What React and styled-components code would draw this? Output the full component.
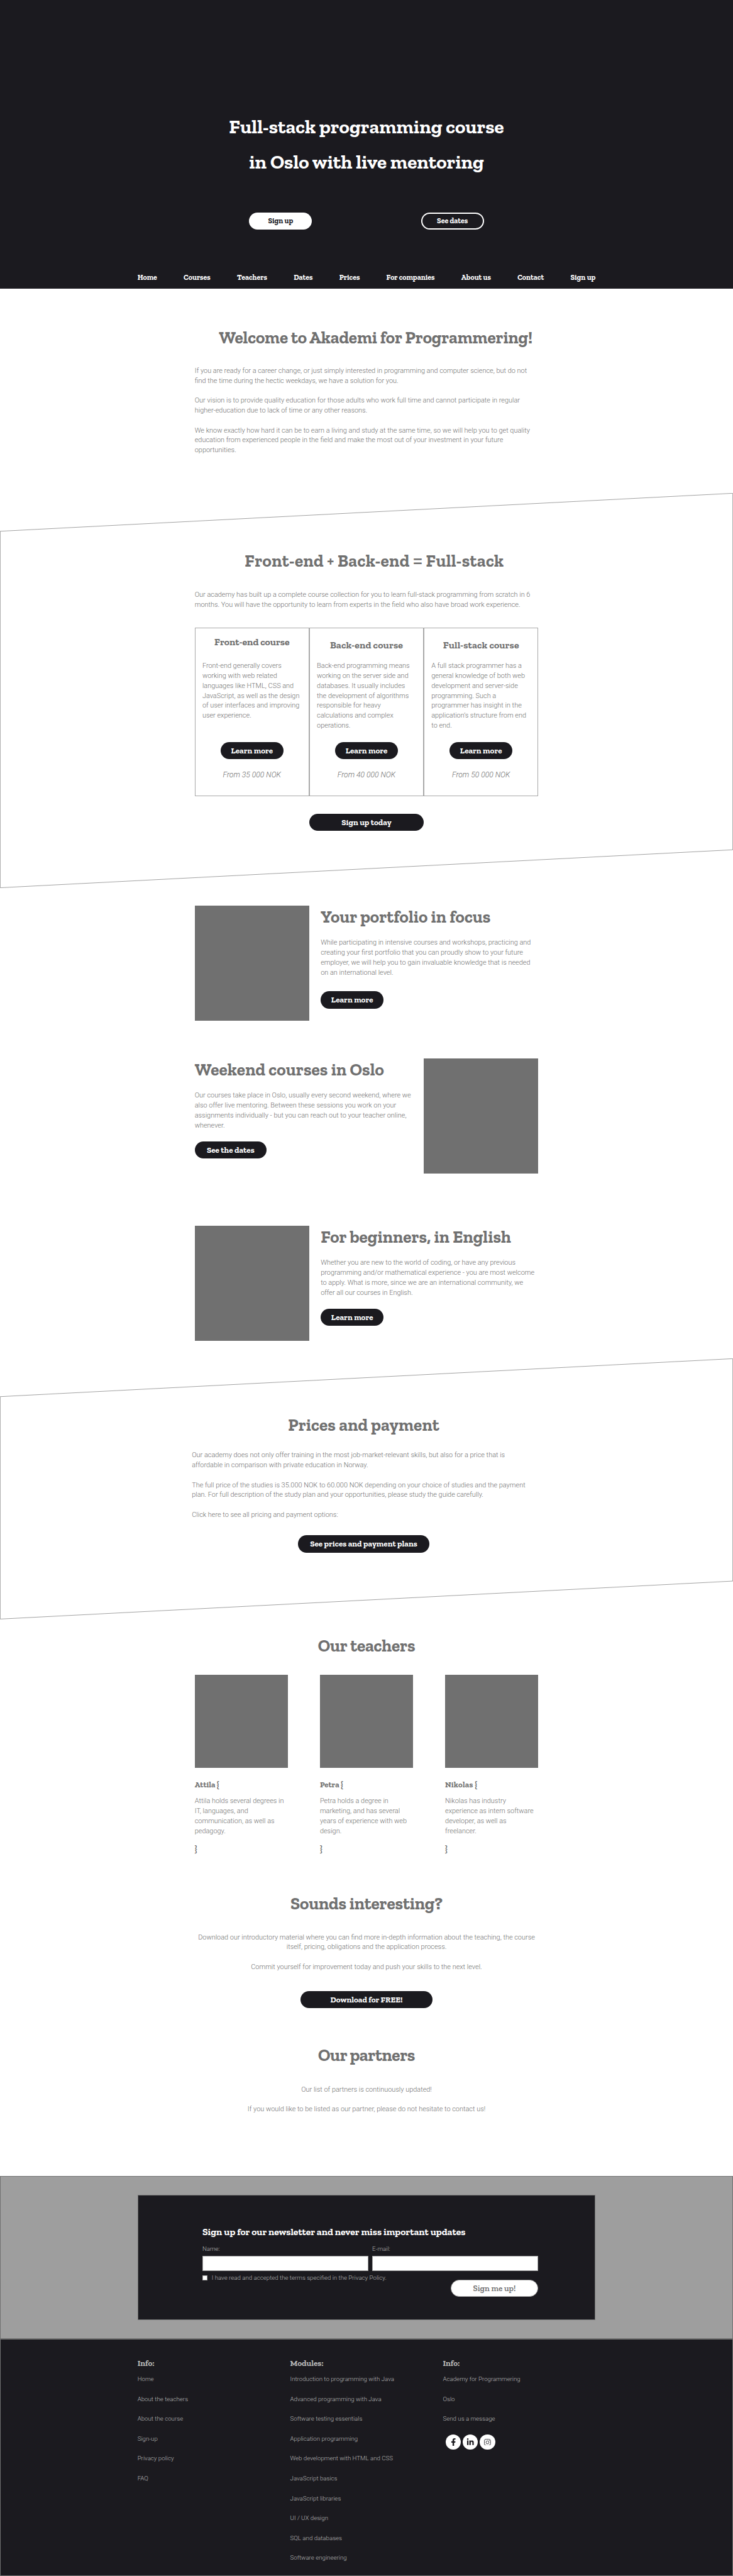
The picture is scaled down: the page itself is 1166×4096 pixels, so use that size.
import React from "react";
import styled, { createGlobalStyle, css } from "styled-components";
import { FaFacebookF, FaLinkedinIn } from "react-icons/fa";

/* The design grid is 1920 units wide; u() turns design units into pixels. */
const u = (n) => `${((n * 1166) / 1920).toFixed(3)}px`;

const color = {
  ink: "#1b1a1f",
  grey: "#707070",
  hairline: "#a8a8a8",
  band: "#9e9e9e",
  pale: "#b7b7b7",
  white: "#ffffff",
};
const slab = `"Zilla Slab", "Roboto Serif", "Noto Serif", serif`;
const sans = `Roboto, "Noto Sans", sans-serif`;

const GlobalStyle = createGlobalStyle`
  *, *::before, *::after { box-sizing: border-box; }
  body {
    margin: 0;
    background: ${color.white};
    color: ${color.grey};
    font-family: ${sans};
    font-weight: 300;
  }
  h1, h2, h3, p, ul { margin: 0; padding: 0; }
  ul { list-style: none; }
`;

const Page = styled.div`
  width: ${u(1920)};
  overflow: hidden;
`;

const Container = styled.div`
  position: relative;
  width: ${u(900)};
  margin: 0 auto;
  display: flex;
  flex-direction: column;
  align-items: center;
  left: ${({ $shift = 0 }) => u($shift)};
`;

/* ---------- shared text and buttons ---------- */

const Heading = styled.h2`
  font: 700 ${u(45)} / ${u(60)} ${slab};
  letter-spacing: ${({ $track = 0 }) => u($track)};
  padding-left: ${({ $indent = 0 }) => u($indent)};
  white-space: nowrap;
`;

const Copy = styled.p`
  align-self: ${({ $center }) => ($center ? "center" : "flex-start")};
  text-align: ${({ $center }) => ($center ? "center" : "left")};
  margin-top: ${({ $gap = 0 }) => u($gap)};
  font: 300 ${u(18)} / ${u(26)} ${sans};
  white-space: pre;
`;

const buttonLook = {
  dark: css`
    background: ${color.ink};
    color: ${color.white};
    font-size: ${u(21.6)};
  `,
  light: css`
    background: ${color.white};
    color: ${color.ink};
    font-size: ${u(19.5)};
  `,
  outline: css`
    background: transparent;
    color: ${color.white};
    border: 2px solid ${color.white};
    font-size: ${u(19.6)};
  `,
  submit: css`
    background: ${color.white};
    color: ${color.grey};
    border: 1px solid ${color.hairline};
    font-size: ${u(21.8)};
    font-weight: 600;
  `,
};

const Button = styled.button`
  flex: none;
  display: flex;
  align-items: center;
  justify-content: center;
  width: ${({ $width = 165 }) => u($width)};
  height: ${u(45)};
  margin: ${({ $gap = 0 }) => u($gap)} 0 0;
  padding: 0;
  border: 0;
  border-radius: ${u(22.5)};
  font-family: ${slab};
  font-weight: 700;
  line-height: 1.2;
  white-space: nowrap;
  ${({ $look = "dark" }) => buttonLook[$look]}
`;

/* ---------- hero ---------- */

const Hero = styled.header`
  height: ${u(755)};
  padding-top: ${u(286.4)};
  background: ${color.ink};
  color: ${color.white};
  display: flex;
  flex-direction: column;
  align-items: center;
`;

const HeroTitle = styled.h1`
  font: 700 ${u(51.4)} / ${u(93)} ${slab};
  text-align: center;
`;

const HeroActions = styled.div`
  display: flex;
  gap: ${u(285)};
  margin-top: ${u(84)};
`;

const Nav = styled.nav`
  width: ${u(1200)};
  margin-top: ${u(114)};
  display: flex;
  justify-content: space-between;
  font: 700 ${u(19.6)} / ${u(26)} ${slab};
`;

/* ---------- sections ---------- */

const Welcome = styled.section`
  height: ${u(536.3)};
  padding-top: ${u(99.2)};
`;

const Slanted = styled.section`
  position: relative;
  height: ${({ $height }) => u($height)};
  padding-top: ${({ $top }) => u($top)};
`;

const Outline = styled.svg`
  position: absolute;
  inset: 0;
  width: 100%;
  height: 100%;
  fill: none;
  stroke: ${color.grey};
  stroke-width: 0.65;
`;

const SlantOutline = ({ height }) => (
  <Outline viewBox={`0 0 1920 ${height}`} preserveAspectRatio="none" aria-hidden="true">
    <polygon
      points={`0.6,100 1919.4,0.6 1919.4,${height - 100} 0.6,${height - 0.6}`}
      vectorEffect="non-scaling-stroke"
    />
  </Outline>
);

/* ---------- course cards ---------- */

const Cards = styled.div`
  display: flex;
  width: 100%;
  margin-top: ${u(47.8)};
`;

const Card = styled.article`
  width: ${u(300)};
  height: ${u(440)};
  border: 1px solid ${color.hairline};
  padding: 0 ${u(18.4)};
  display: flex;
  flex-direction: column;
  align-items: center;
`;

const CardHead = styled.div`
  height: ${u(85.4)};
  padding-top: ${({ $drop }) => u($drop)};
`;

const CardTitle = styled.h3`
  font: 700 ${u(26)} / ${u(32)} ${slab};
  letter-spacing: ${({ $track }) => u($track)};
`;

const CardCopy = styled(Copy)`
  height: ${u(212)};
`;

const Price = styled.p`
  margin-top: ${u(29.6)};
  font: italic 300 ${u(20)} / ${u(26)} ${sans};
`;

const courses = [
  {
    title: "Front-end course",
    drop: 19.2,
    track: -0.1,
    price: "From 35 000 NOK",
    text: "Front-end generally covers\nworking with web related\nlanguages like HTML, CSS and\nJavaScript, as well as the design\nof user interfaces and improving\nuser experience.",
  },
  {
    title: "Back-end course",
    drop: 27.2,
    track: 0.2,
    price: "From 40 000 NOK",
    text: "Back-end programming means\nworking on the server side and\ndatabases. It usually includes\nthe development of algorithms\nresponsible for heavy\ncalculations and complex\noperations.",
  },
  {
    title: "Full-stack course",
    drop: 27.2,
    track: 0.15,
    price: "From 50 000 NOK",
    text: "A full stack programmer has a\ngeneral knowledge of both web\ndevelopment and server-side\nprogramming. Such a\nprogrammer has insight in the\napplication’s structure from end\nto end.",
  },
];

/* ---------- features ---------- */

const Features = styled.section`
  height: ${u(1231.7)};
  padding-top: ${u(46.7)};
`;

const Feature = styled.article`
  width: ${u(900)};
  margin: 0 auto ${({ $after }) => u($after)};
  display: flex;
  gap: ${u(30)};
  flex-direction: ${({ $reverse }) => ($reverse ? "row-reverse" : "row")};
`;

const Picture = styled.div`
  flex: none;
  width: ${({ $size }) => u($size)};
  height: ${({ $size }) => u($size)};
  background: ${color.grey};
`;

const FeatureBody = styled.div`
  flex: 1;
  display: flex;
  flex-direction: column;
  align-items: flex-start;
`;

const FeatureTitle = styled(Heading)`
  line-height: ${u(58)};
`;

const features = [
  {
    title: "Your portfolio in focus",
    track: 0.12,
    text: "While participating in intensive courses and workshops, practicing and\ncreating your first portfolio that you can proudly show to your future\nemployer, we will help you to gain invaluable knowledge that is needed\non an international level.",
    action: "Learn more",
    gap: 36,
    after: 100,
  },
  {
    title: "Weekend courses in Oslo",
    track: 0.17,
    text: "Our courses take place in Oslo, usually every second weekend, where we\nalso offer live mentoring. Between these sessions you work on your\nassignments individually - but you can reach out to your teacher online,\nwhenever.",
    action: "See the dates",
    width: 188,
    gap: 29,
    after: 138,
    reverse: true,
  },
  {
    title: "For beginners, in English",
    track: 0.12,
    text: "Whether you are new to the world of coding, or have any previous\nprogramming and/or mathematical experience - you are most welcome\nto apply. What is more, since we are an international community, we\noffer all our courses in English.",
    action: "Learn more",
    gap: 29,
    after: 0,
  },
];

/* ---------- teachers, material, partners ---------- */

const Closing = styled.section`
  height: ${u(1457)};
  padding-top: ${u(39.2)};
`;

const Teachers = styled.div`
  width: 100%;
  display: flex;
  justify-content: space-between;
  margin: ${u(45.8)} 0 ${u(100.9)};
`;

const Teacher = styled.article`
  width: ${u(244)};
  display: flex;
  flex-direction: column;
`;

const TeacherName = styled.h3`
  margin-top: ${({ $gap }) => u($gap)};
  font: 700 ${u(21)} / ${u(26)} ${slab};
  letter-spacing: ${({ $track = 0 }) => u($track)};
`;

const teachers = [
  {
    name: "Attila",
    text: "Attila holds several degrees in\nIT, languages, and\ncommunication, as well as\npedagogy.",
  },
  {
    name: "Petra",
    text: "Petra holds a degree in\nmarketing, and has several\nyears of experience with web\ndesign.",
  },
  {
    name: "Nikolas",
    track: 0.4,
    text: "Nikolas has industry\nexperience as intern software\ndeveloper, as well as\nfreelancer.",
  },
];

const PartnersHeading = styled(Heading)`
  margin-top: ${u(92.8)};
`;

/* ---------- newsletter ---------- */

const Newsletter = styled.section`
  height: ${u(427)};
  border: 1px solid ${color.grey};
  background: ${color.band};
  display: flex;
  align-items: center;
  justify-content: center;
`;

const Panel = styled.form`
  width: ${u(1200)};
  height: ${u(327)};
  padding: ${u(78.8)} ${u(148.4)} 0 ${u(168.4)};
  border: 1px solid ${color.grey};
  background: ${color.ink};
`;

const PanelTitle = styled.h3`
  color: ${color.white};
  font: 700 ${u(25.7)} / ${u(32)} ${slab};
  white-space: nowrap;
`;

const Fields = styled.div`
  display: flex;
  gap: ${u(10)};
  margin-top: ${u(19)};
`;

const Field = styled.label`
  flex: 1;
  display: flex;
  flex-direction: column;
  gap: ${u(7.8)};
  color: ${color.pale};
  font: 300 ${u(16)} / ${u(20)} ${sans};
`;

const Input = styled.input`
  width: 100%;
  height: ${u(40)};
  padding: 0 ${u(10)};
  border: 1px solid ${color.hairline};
  border-radius: 0;
  background: ${color.white};
`;

const SubmitRow = styled.div`
  display: flex;
  justify-content: space-between;
  align-items: flex-start;
  margin-top: ${u(7.5)};
`;

const Consent = styled.label`
  display: flex;
  align-items: center;
  gap: ${u(11)};
  color: ${color.pale};
  font: 300 ${u(16)} / ${u(20)} ${sans};
`;

const Checkbox = styled.input`
  appearance: none;
  width: ${u(13.4)};
  height: ${u(13.4)};
  margin: 0;
  border: 1px solid ${color.hairline};
  background: ${color.white};
`;

/* ---------- footer ---------- */

const Footer = styled.footer`
  height: ${u(620.5)};
  padding: ${u(49.4)} ${u(358.4)} 0;
  border: 1px solid ${color.grey};
  background: ${color.ink};
  color: ${color.pale};
  display: flex;
`;

const FooterColumn = styled.div`
  width: ${u(400)};
`;

const FooterTitle = styled.h3`
  font: 700 ${u(21.7)} / ${u(26)} ${slab};
`;

const FooterList = styled.ul`
  display: flex;
  flex-direction: column;
  gap: ${u(32)};
  margin-top: ${u(18.7)};
  font: 300 ${u(16)} / ${u(20)} ${sans};
`;

const Social = styled.div`
  display: flex;
  gap: ${u(5)};
  margin: ${u(30.3)} 0 0 ${u(7)};
`;

const SocialLink = styled.a`
  width: ${u(40)};
  height: ${u(40)};
  border-radius: 50%;
  background: ${color.white};
  color: ${color.ink};
  display: flex;
  align-items: center;
  justify-content: center;
  svg {
    height: ${({ $size }) => u($size)};
    width: auto;
  }
`;

const InstagramIcon = () => (
  <svg viewBox="0 0 18 18" fill="none" stroke="currentColor" strokeWidth="1.4">
    <rect x="0.8" y="0.8" width="16.4" height="16.4" rx="4.6" />
    <circle cx="9" cy="9" r="3.9" />
    <circle cx="13.7" cy="4.3" r="0.9" fill="currentColor" stroke="none" />
  </svg>
);

const navItems = [
  "Home",
  "Courses",
  "Teachers",
  "Dates",
  "Prices",
  "For companies",
  "About us",
  "Contact",
  "Sign up",
];

const infoLinks = ["Home", "About the teachers", "About the course", "Sign-up", "Privacy policy", "FAQ"];

const moduleLinks = [
  "Introduction to programming with Java",
  "Advanced programming with Java",
  "Software testing essentials",
  "Application programming",
  "Web development with HTML and CSS",
  "JavaScript basics",
  "JavaScript libraries",
  "UI / UX design",
  "SQL and databases",
  "Software engineering",
];

const contactLinks = ["Academy for Programmering", "Oslo", "Send us a message"];

const Links = ({ title, items, children }) => (
  <FooterColumn>
    <FooterTitle>{title}</FooterTitle>
    <FooterList>
      {items.map((item) => (
        <li key={item}>{item}</li>
      ))}
    </FooterList>
    {children}
  </FooterColumn>
);

export default function App() {
  return (
    <Page>
      <GlobalStyle />
      <Hero>
        <HeroTitle>
          Full-stack programming course
          <br />
          in Oslo with live mentoring
        </HeroTitle>
        <HeroActions>
          <Button $look="light">Sign up</Button>
          <Button $look="outline">See dates</Button>
        </HeroActions>
        <Nav>
          {navItems.map((item) => (
            <span key={item}>{item}</span>
          ))}
        </Nav>
      </Hero>

      <Welcome>
        <Container>
          <Heading $track={-0.2} $indent={48}>
            Welcome to Akademi for Programmering!
          </Heading>
          <Copy $gap={44}>
            {
              "If you are ready for a career change, or just simply interested in programming and computer science, but do not\nfind the time during the hectic weekdays, we have a solution for you.\n\nOur vision is to provide quality education for those adults who work full time and cannot participate in regular\nhigher-education due to lack of time or any other reasons.\n\nWe know exactly how hard it can be to earn a living and study at the same time, so we will help you to get quality\neducation from experienced people in the field and make the most out of your investment in your future\nopportunities."
            }
          </Copy>
        </Container>
      </Welcome>

      <Slanted $height={1034} $top={148}>
        <SlantOutline height={1034} />
        <Container>
          <Heading $track={0.53} $indent={41}>
            Front-end + Back-end = Full-stack
          </Heading>
          <Copy $gap={44.8}>
            {
              "Our academy has built up a complete course collection for you to learn full-stack programming from scratch in 6\nmonths. You will have the opportunity to learn from experts in the field who also have broad work experience."
            }
          </Copy>
          <Cards>
            {courses.map((course) => (
              <Card key={course.title}>
                <CardHead $drop={course.drop}>
                  <CardTitle $track={course.track}>{course.title}</CardTitle>
                </CardHead>
                <CardCopy>{course.text}</CardCopy>
                <Button>Learn more</Button>
                <Price>{course.price}</Price>
              </Card>
            ))}
          </Cards>
          <Button $width={300} $gap={47}>
            Sign up today
          </Button>
        </Container>
      </Slanted>

      <Features>
        {features.map((feature) => (
          <Feature key={feature.title} $reverse={feature.reverse} $after={feature.after}>
            <Picture $size={300} />
            <FeatureBody>
              <FeatureTitle $track={feature.track}>{feature.title}</FeatureTitle>
              <Copy $gap={25.8}>{feature.text}</Copy>
              <Button $width={feature.width} $gap={feature.gap}>
                {feature.action}
              </Button>
            </FeatureBody>
          </Feature>
        ))}
      </Features>

      <Slanted $height={683} $top={144.5}>
        <SlantOutline height={683} />
        <Container $shift={-7.5}>
          <Heading $track={0.18}>Prices and payment</Heading>
          <Copy $gap={36}>
            {
              "Our academy does not only offer training in the most job-market-relevant skills, but also for a price that is\naffordable in comparison with private education in Norway.\n\nThe full price of the studies is 35.000 NOK to 60.000 NOK depending on your choice of studies and the payment\nplan. For full description of the study plan and your opportunities, please study the guide carefully.\n\nClick here to see all pricing and payment options:"
            }
          </Copy>
          <Button $width={345} $gap={40.6}>
            See prices and payment plans
          </Button>
        </Container>
      </Slanted>

      <Closing>
        <Container>
          <Heading $track={-0.25}>Our teachers</Heading>
          <Teachers>
            {teachers.map((teacher) => (
              <Teacher key={teacher.name}>
                <Picture $size={244} />
                <TeacherName $gap={31} $track={teacher.track}>
                  {teacher.name} {"{"}
                </TeacherName>
                <Copy $gap={17.2}>{teacher.text}</Copy>
                <TeacherName $gap={21}>{"}"}</TeacherName>
              </Teacher>
            ))}
          </Teachers>

          <Heading $track={-0.25}>Sounds interesting?</Heading>
          <Copy $center $gap={44.4}>
            {
              "Download our introductory material where you can find more in-depth information about the teaching, the course\nitself, pricing, obligations and the application process.\n\nCommit yourself for improvement today and push your skills to the next level."
            }
          </Copy>
          <Button $width={345} $gap={49.8}>
            Download for FREE!
          </Button>

          <PartnersHeading $track={-0.6}>Our partners</PartnersHeading>
          <Copy $center $gap={47}>
            {
              "Our list of partners is continuously updated!\n\nIf you would like to be listed as our partner, please do not hesitate to contact us!"
            }
          </Copy>
        </Container>
      </Closing>

      <Newsletter>
        <Panel>
          <PanelTitle>Sign up for our newsletter and never miss important updates</PanelTitle>
          <Fields>
            <Field>
              Name:
              <Input type="text" />
            </Field>
            <Field>
              E-mail:
              <Input type="email" />
            </Field>
          </Fields>
          <SubmitRow>
            <Consent>
              <Checkbox type="checkbox" />
              I have read and accepted the terms specified in the Privacy Policy.
            </Consent>
            <Button type="button" $look="submit" $width={230} $gap={15.5}>
              Sign me up!
            </Button>
          </SubmitRow>
        </Panel>
      </Newsletter>

      <Footer>
        <Links title="Info:" items={infoLinks} />
        <Links title="Modules:" items={moduleLinks} />
        <Links title="Info:" items={contactLinks}>
          <Social>
            <SocialLink $size={20.6} aria-label="Facebook">
              <FaFacebookF />
            </SocialLink>
            <SocialLink $size={20.4} aria-label="LinkedIn">
              <FaLinkedinIn />
            </SocialLink>
            <SocialLink $size={17.8} aria-label="Instagram">
              <InstagramIcon />
            </SocialLink>
          </Social>
        </Links>
      </Footer>
    </Page>
  );
}
